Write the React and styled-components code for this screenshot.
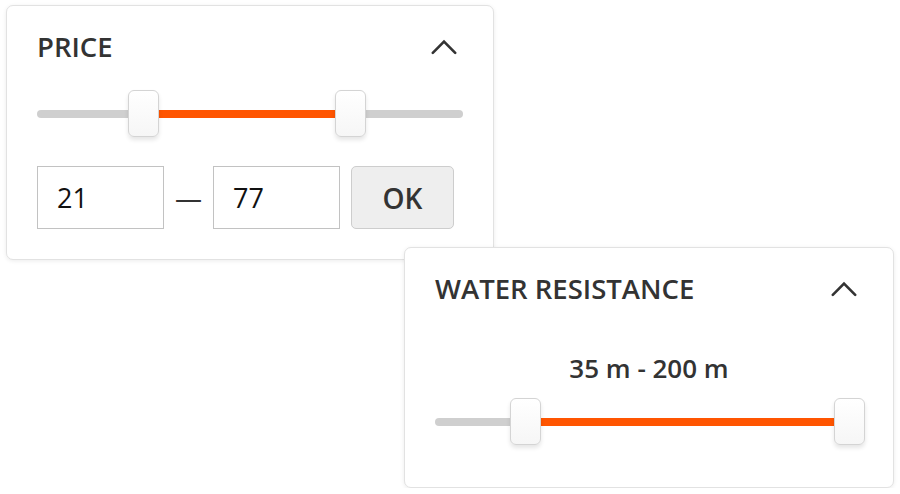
import React from 'react';
import styled, { createGlobalStyle } from 'styled-components';

const GlobalStyle = createGlobalStyle`
  html, body {
    margin: 0;
    padding: 0;
    background: #ffffff;
  }
  body {
    font-family: "Open Sans", "Noto Sans", "Liberation Sans", sans-serif;
    color: #333333;
  }
`;

const Page = styled.div`
  display: flex;
  flex-direction: column;
  align-items: flex-start;
  padding: 5px 0 0 6px;
`;

const Card = styled.section`
  position: relative;
  box-sizing: border-box;
  width: ${(p) => p.$width}px;
  margin-left: ${(p) => p.$offsetX || 0}px;
  margin-top: ${(p) => p.$offsetY || 0}px;
  padding: 22px 30px ${(p) => p.$padBottom}px 30px;
  background: #ffffff;
  border: 1px solid #e2e2e2;
  border-radius: 7px;
  box-shadow: 0 1px 4px rgba(0, 0, 0, 0.08);
`;

const Header = styled.div`
  display: flex;
  align-items: center;
  justify-content: space-between;
  height: 37px;
`;

const Title = styled.h3`
  margin: 0;
  font-size: 27.5px;
  line-height: 37px;
  font-weight: 600;
  color: #333333;
`;

const Toggle = styled.button`
  display: flex;
  align-items: center;
  justify-content: center;
  width: 30px;
  height: 30px;
  margin-right: 4px;
  padding: 0;
  border: 0;
  background: transparent;
  cursor: pointer;
`;

const SliderWrap = styled.div`
  position: relative;
  display: flex;
  align-items: center;
  height: 47px;
  margin-top: ${(p) => p.$gap}px;
`;

const Rail = styled.div`
  width: 100%;
  height: 8px;
  border-radius: 4px;
  background: #cfcfcf;
`;

const Fill = styled.div`
  position: absolute;
  top: 50%;
  height: 8px;
  margin-top: -4px;
  background: #ff5501;
`;

const Thumb = styled.div`
  position: absolute;
  top: 0;
  box-sizing: border-box;
  width: 31px;
  height: 47px;
  margin-left: -15px;
  background: linear-gradient(#ffffff, #f6f6f6);
  border: 1px solid #d4d4d4;
  border-radius: 6px;
  box-shadow: 0 3px 4px rgba(0, 0, 0, 0.1);
`;

const RangeRow = styled.div`
  display: flex;
  align-items: center;
  margin-top: 29px;
`;

const NumberInput = styled.input`
  box-sizing: border-box;
  width: 127px;
  height: 63px;
  padding: 0 0 0 19px;
  border: 1px solid #c2c2c2;
  border-radius: 0;
  font-family: "Open Sans", "Noto Sans", sans-serif;
  font-size: 27px;
  color: #111111;
  outline: none;
`;

const Dash = styled.span`
  width: 49px;
  text-align: center;
  font-size: 27px;
  color: #333333;
`;

const OkButton = styled.button`
  box-sizing: border-box;
  width: 103px;
  height: 63px;
  margin-left: 11px;
  background: #eeeeee;
  border: 1px solid #cdcdcd;
  border-radius: 5px;
  font-family: "Open Sans", "Noto Sans", sans-serif;
  font-size: 28px;
  font-weight: 600;
  color: #333333;
  cursor: pointer;
`;

const RangeLabel = styled.div`
  margin-top: 44px;
  text-align: center;
  font-size: 26px;
  line-height: 34px;
  font-weight: 600;
  color: #333333;
`;

const ChevronUp = () => (
  <svg width="26" height="16" viewBox="0 0 26 16" fill="none">
    <polyline
      points="1.8,13.8 13,2.6 24.2,13.8"
      stroke="#333"
      strokeWidth="2.6"
      strokeLinecap="round"
      strokeLinejoin="miter"
    />
  </svg>
);

const RangeSlider = ({ from, to, gap }) => (
  <SliderWrap $gap={gap}>
    <Rail />
    <Fill style={{ left: `${from}%`, width: `${to - from}%` }} />
    <Thumb style={{ left: `${from}%` }} />
    <Thumb style={{ left: `${to}%` }} />
  </SliderWrap>
);

const App = () => {
  return (
    <>
      <GlobalStyle />
      <Page>
        <Card $width={488} $padBottom={30}>
          <Header>
            <Title>PRICE</Title>
            <Toggle aria-label="collapse"><ChevronUp /></Toggle>
          </Header>
          <RangeSlider from={24.8} to={73.4} gap={25} />
          <RangeRow>
            <NumberInput defaultValue="21" />
            <Dash>—</Dash>
            <NumberInput defaultValue="77" />
            <OkButton>OK</OkButton>
          </RangeRow>
        </Card>

        <Card $width={490} $offsetX={398} $offsetY={-13} $padBottom={42}>
          <Header>
            <Title>WATER RESISTANCE</Title>
            <Toggle aria-label="collapse"><ChevronUp /></Toggle>
          </Header>
          <RangeLabel>35 m - 200 m</RangeLabel>
          <RangeSlider from={21.0} to={96.7} gap={13} />
        </Card>
      </Page>
    </>
  );
};

export default App;
